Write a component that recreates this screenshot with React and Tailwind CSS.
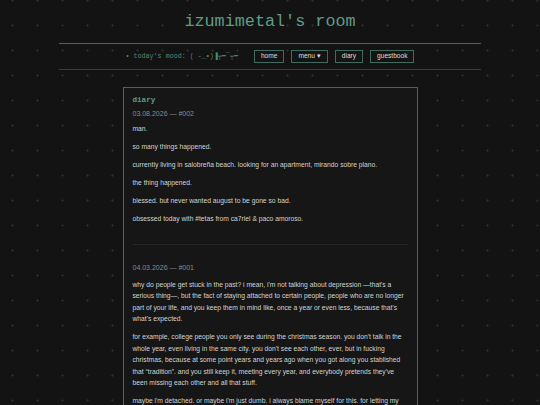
import React from "react";

const mono = { fontFamily: '"Liberation Mono", "DejaVu Sans Mono", monospace' };

function Entry({ date, paras, first }) {
  return (
    <div>
      <div className={`text-[7px] leading-[10px] text-[#8a8a8a] ${first ? "mt-[4px]" : ""}`}>{date}</div>
      <div className={first ? "mt-[4px]" : "mt-[6px]"}>
        {paras.map((p, i) => (
          <p key={i} className={`text-[6.72px] leading-[11.5px] text-[#d2d2d2] ${i > 0 ? "mt-[6.5px]" : ""}`}>
            {p}
          </p>
        ))}
      </div>
    </div>
  );
}

export default function App() {
  return (
    <div
      className="min-h-screen w-full bg-[#131313] bg-[radial-gradient(circle,#2c2c2c_0.9px,transparent_1.3px)] bg-[length:25px_25px] bg-[position:0px_-12px] overflow-hidden"
      style={{ fontFamily: '"Liberation Sans", Arial, sans-serif' }}
    >
      <div className="flex flex-col items-center">
        <h1 className="mt-[12px] text-[16.8px] leading-[20px] text-[#5f9c88]" style={mono}>
          izumimetal's room
        </h1>
        <div className="mt-[11px] w-[422px] border-t border-b border-t-[#3f6b5e] border-b-[#3a3a3a] h-[27px] flex items-center justify-center gap-[16px]">
          <div className="text-[6.7px] text-[#4f8a77] whitespace-nowrap flex items-center" style={mono}>
            <span>• today's mood: (</span>
            <span className="text-[6.7px]">&nbsp;-_•)▐╤━‾╤━</span>
          </div>
          <div className="flex items-center gap-[7px]">
            {["home", "menu ▾", "diary", "guestbook"].map((t) => (
              <div
                key={t}
                className="h-[13px] px-[6px] border border-[#3f6b5e] bg-[#141414] text-[6.6px] text-[#dedede] flex items-center justify-center leading-none whitespace-nowrap"
              >
                {t}
              </div>
            ))}
          </div>
        </div>

        <div className="mt-[17px] w-[295px] border border-[#3d6b5d] bg-[#161616] pt-[7px] px-[9px] pb-[20px]">
          <h2 className="text-[7.6px] leading-[10px] font-bold text-[#5f9c88]" style={mono}>
            diary
          </h2>
          <Entry
            first
            date="03.08.2026 — #002"
            paras={[
              "man.",
              "so many things happened.",
              "currently living in salobreña beach. looking for an apartment, mirando sobre plano.",
              "the thing happened.",
              "blessed. but never wanted august to be gone so bad.",
              "obsessed today with #tetas from ca7riel & paco amoroso.",
            ]}
          />
          <div className="mt-[19px] border-t border-[#262626]" />
          <div className="pt-[18px]">
            <Entry
              date="04.03.2026 — #001"
              paras={[
                "why do people get stuck in the past? i mean, i'm not talking about depression —that's a serious thing—, but the fact of staying attached to certain people, people who are no longer part of your life, and you keep them in mind like, once a year or even less, because that's what's expected.",
                "for example, college people you only see during the christmas season. you don't talk in the whole year, even living in the same city. you don't see each other, ever, but in fucking christmas, because at some point years and years ago when you got along you stablished that “tradition”. and you still keep it, meeting every year, and everybody pretends they've been missing each other and all that stuff.",
                "maybe i'm detached. or maybe i'm just dumb. i always blame myself for this. for letting my guard down, for expecting something from people who never promised anything.",
              ]}
            />
          </div>
        </div>
      </div>
    </div>
  );
}
